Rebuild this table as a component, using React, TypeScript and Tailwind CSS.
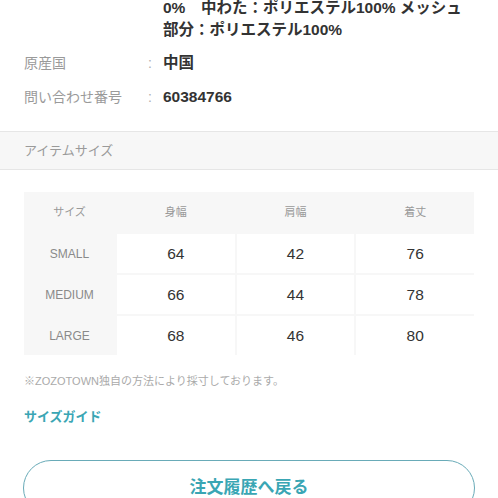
import React from 'react';

const FONT = { fontFamily: '"Liberation Sans", "Noto Sans CJK JP", sans-serif' };

const rows = [
  { size: 'SMALL', v: ['64', '42', '76'] },
  { size: 'MEDIUM', v: ['66', '44', '78'] },
  { size: 'LARGE', v: ['68', '46', '80'] },
];

const InfoRow: React.FC<{ label: string; children: React.ReactNode }> = ({ label, children }) => (
  <div className="flex leading-[22px]">
    <div className="w-[124px] shrink-0 text-[14px] text-[#9a9a9a]">{label}</div>
    <div className="w-[15px] shrink-0 text-[14px] text-[#b0b0b0]">{label ? ':' : ''}</div>
    <div className="flex-1 text-[15.5px] font-bold text-[#333]">{children}</div>
  </div>
);

export default function App() {
  return (
    <div className="w-[498px] h-[498px] overflow-hidden bg-white" style={FONT}>
      {/* spec list */}
      <div className="px-6 mt-[-3px] flex flex-col gap-[11px]">
        <InfoRow label="">
          <div>0%　中わた：ポリエステル100% メッシュ</div>
          <div>部分：ポリエステル100%</div>
        </InfoRow>
        <div className="flex flex-col gap-[12px]">
          <InfoRow label="原産国">中国</InfoRow>
          <InfoRow label="問い合わせ番号">60384766</InfoRow>
        </div>
      </div>

      {/* section header */}
      <div className="mt-[23px] h-[39px] border-y border-[#e6e6e6] bg-[#f7f7f7] px-6 flex items-center text-[13px] text-[#9a9a9a]">
        アイテムサイズ
      </div>

      {/* size table */}
      <div className="mx-6 mt-[22px] bg-[#f7f7f7] grid grid-cols-[91px_1fr_1fr_1fr] grid-rows-[40px_39px_39px_39px] gap-[2px]">
        <div className="flex items-center justify-center text-[11px] text-[#999]">サイズ</div>
        <div className="flex items-center justify-center text-[11px] text-[#999]">身幅</div>
        <div className="flex items-center justify-center text-[11px] text-[#999]">肩幅</div>
        <div className="flex items-center justify-center text-[11px] text-[#999]">着丈</div>
        {rows.map((r) => (
          <React.Fragment key={r.size}>
            <div className="flex items-center justify-center text-[12px] text-[#8a8a8a]">{r.size}</div>
            {r.v.map((n, i) => (
              <div key={i} className="bg-white flex items-center justify-center text-[15.5px] text-[#333]">
                {n}
              </div>
            ))}
          </React.Fragment>
        ))}
      </div>

      <div className="px-6 mt-[18px] text-[11px] leading-[16px] text-[#aaa]">
        ※ZOZOTOWN独自の方法により採寸しております。
      </div>

      <div className="px-6 mt-[18px] text-[13px] leading-[20px] font-bold text-[#3aa6b4]">サイズガイド</div>

      <div className="mx-[23px] mt-[33px] h-[56px] rounded-full border-[1.5px] border-[#69abb8] flex items-center justify-center text-[17px] font-bold text-[#3aa6b4]">
        注文履歴へ戻る
      </div>
    </div>
  );
}
